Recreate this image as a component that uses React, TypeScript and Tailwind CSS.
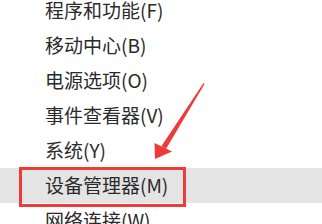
const items = [
  "程序和功能(F)",
  "移动中心(B)",
  "电源选项(O)",
  "事件查看器(V)",
  "系统(Y)",
  "设备管理器(M)",
  "网络连接(W)",
];

export default function App() {
  return (
    <div className="relative w-[322px] h-[224px] overflow-hidden bg-white">
      <div className="flex flex-col -mt-[7.5px] font-['Noto_Sans_CJK_SC',sans-serif] text-[19px] text-[#2a2a2a]">
        {items.map((label) => (
          <div
            key={label}
            className={`flex items-center h-[35px] pl-[45px] whitespace-nowrap ${
              label === "设备管理器(M)" ? "bg-[#e4e4e4]" : ""
            }`}
          >
            {label}
          </div>
        ))}
      </div>

      {/* annotation box */}
      <div className="absolute left-[19px] top-[167px] w-[167px] h-[40px] border-[3px] border-[#ef3a3a]" />

      {/* annotation arrow */}
      <svg className="absolute left-0 top-0" width="322" height="224" viewBox="0 0 322 224">
        <path d="M203.5 83 L204.5 84 L166 149 L161.5 146 Z" fill="#ef3a3a" />
        <path d="M155 159 L154.5 143 L172 151.5 Z" fill="#ef3a3a" />
      </svg>
    </div>
  );
}
